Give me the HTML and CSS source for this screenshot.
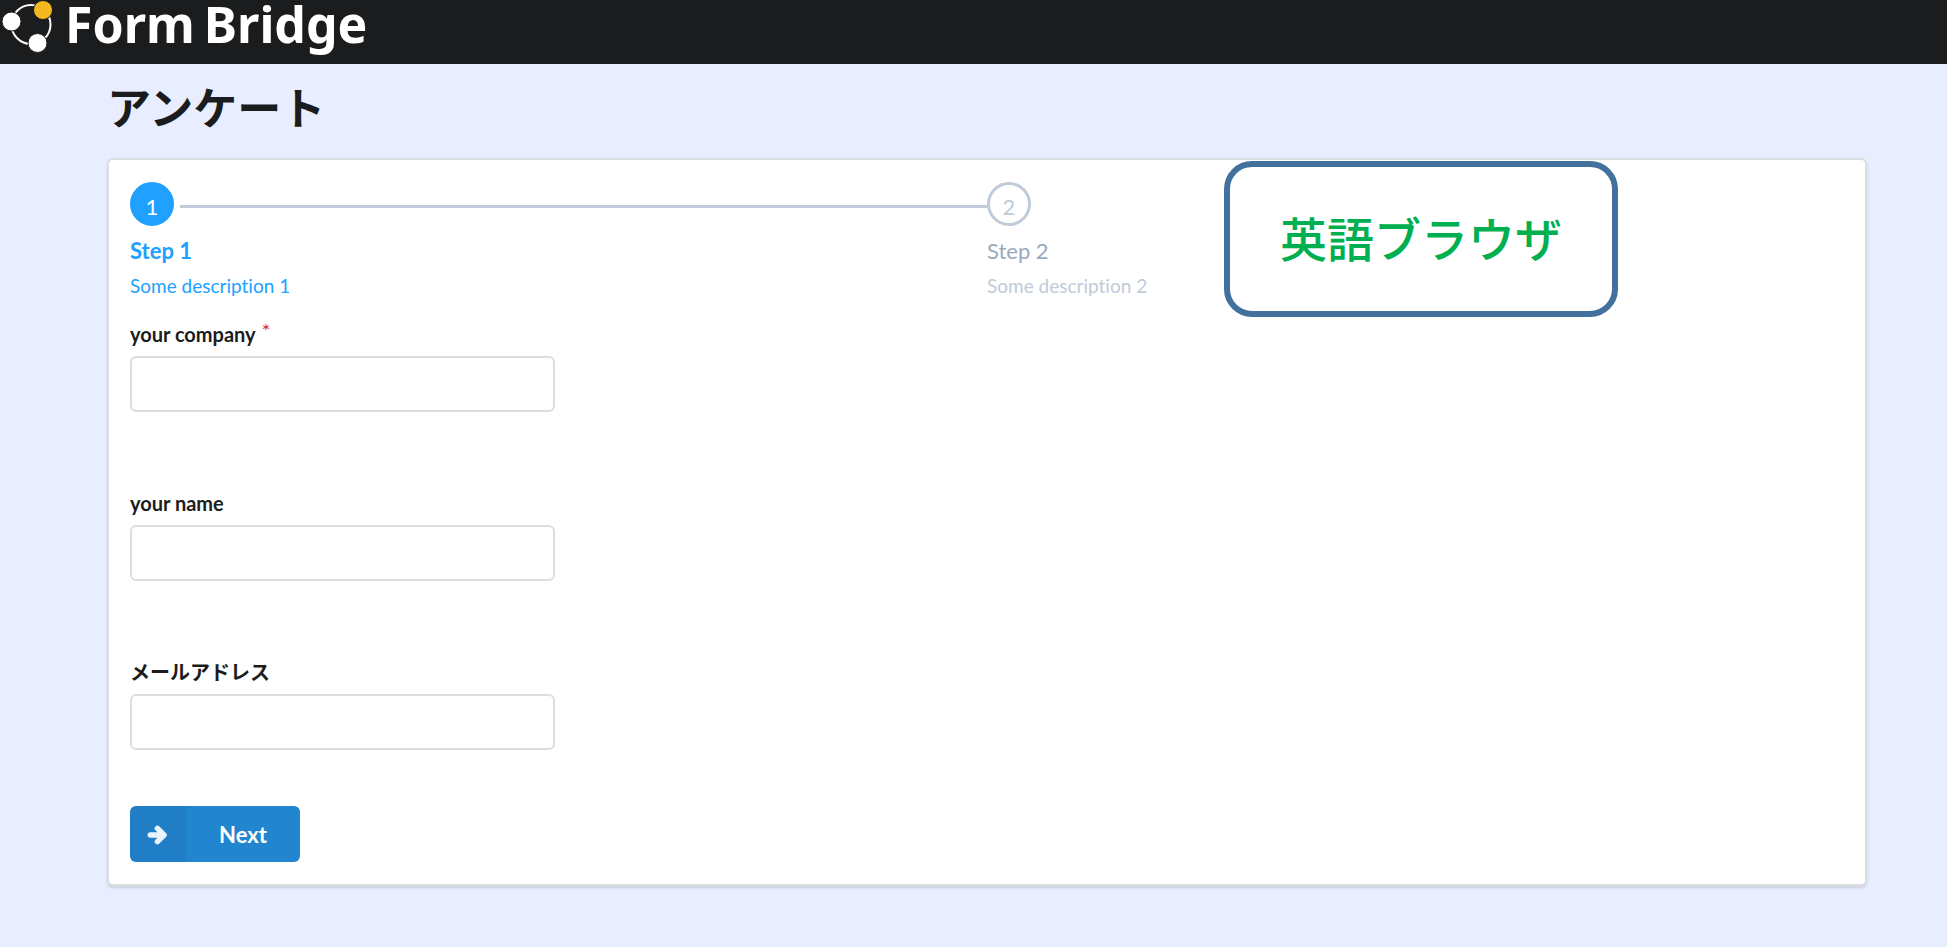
FILE: index.html
```html
<!DOCTYPE html>
<html lang="ja">
<head>
    <meta charset="UTF-8">
    <meta name="viewport" content="width=device-width, initial-scale=1.0">
    <title>Form Bridge</title>
    <link rel="stylesheet" href="styles.css">
</head>
<body>
    <header class="header">
        <svg class="logo-mark" viewBox="0 0 54 54" aria-hidden="true">
            <circle class="logo-ring" cx="31" cy="24.500" r="19.500"/>
            <circle class="logo-dot" cx="11.500" cy="21.500" r="9.500"/>
            <circle class="logo-dot" cx="37.500" cy="43" r="9.500"/>
            <circle class="logo-dot logo-dot--yellow" cx="43" cy="10" r="9.500"/>
        </svg>
        <div class="logo-text"><span>Form</span> <span>Bridge</span></div>
    </header>

    <main class="container">
        <h1 class="title">アンケート</h1>

        <div class="segment">
            <ol class="steps">
                <li class="step active">
                    <div class="step-head"><span class="step-number">1</span></div>
                    <div class="step-title">Step 1</div>
                    <div class="step-description">Some description 1</div>
                </li>
                <li class="step">
                    <div class="step-head"><span class="step-number">2</span></div>
                    <div class="step-title">Step 2</div>
                    <div class="step-description">Some description 2</div>
                </li>
            </ol>

            <form class="form">
                <div class="field required">
                    <label for="company">your company</label>
                    <input type="text" id="company">
                </div>
                <div class="field">
                    <label for="name">your name</label>
                    <input type="text" id="name">
                </div>
                <div class="field">
                    <label for="mail">メールアドレス</label>
                    <input type="text" id="mail">
                </div>
                <button type="button" class="next">
                    <span class="next-icon">
                        <svg viewBox="0 0 20 20" aria-hidden="true">
                            <path d="M3 10H15M9.500 4L15.500 10L9.500 16"/>
                        </svg>
                    </span>
                    <span class="next-label">Next</span>
                </button>
            </form>

            <div class="callout">英語ブラウザ</div>
        </div>
    </main>
</body>
</html>
```
FILE: styles.css
```css
* {
    box-sizing: border-box;
}

body {
    margin: 0;
    min-height: 100vh;
    background: #e8eeff;
    color: #1b1c1d;
    font-family: Lato, "Noto Sans CJK JP", sans-serif;
    font-size: 20px;
    line-height: 28px;
    font-variant-ligatures: none;
}

.header {
    display: flex;
    align-items: flex-start;
    height: 64px;
    background: #1b1c1d;
}

.logo-mark {
    width: 54px;
    height: 54px;
}

.logo-ring {
    fill: none;
    stroke: #fff;
    stroke-width: 2;
}

.logo-dot {
    fill: #fff;
    stroke: #1b1c1d;
    stroke-width: 1;
}

.logo-dot--yellow {
    fill: #f5b91f;
}

.logo-text {
    display: flex;
    gap: 9px;
    margin-left: 11px;
    color: #fff;
    font-family: "Noto Sans", sans-serif;
    font-size: 50px;
    font-weight: 700;
    line-height: 48px;
}

.container {
    padding: 20px 80px 48px 107px;
}

.title {
    margin: 0 0 26px;
    font-size: 44px;
    font-weight: 700;
    line-height: 48px;
}

.segment {
    position: relative;
    padding: 22px 21px;
    background: #fff;
    border: 2px solid #dcdde0;
    border-radius: 6px;
    box-shadow: 0 2px 3px rgba(34, 36, 38, 0.15);
}

.steps {
    display: flex;
    margin: 0;
    padding: 0;
    list-style: none;
}

.step {
    flex: 1;
    color: #bfcbd9;
}

.step-head {
    display: flex;
    align-items: center;
    gap: 6px;
}

.step-number {
    width: 44px;
    height: 44px;
    padding-top: 3px;
    border: 3px solid #bfcbd9;
    border-radius: 50%;
    font-size: 22px;
    line-height: 38px;
    text-align: center;
}

.step-head::after {
    content: '';
    flex: 1;
    height: 3px;
    margin-top: 5px;
    background: #bfcbd9;
}

.step:last-child .step-head::after {
    display: none;
}

.step-title {
    margin-top: 7px;
    color: #99a9bf;
    font-size: 22px;
    line-height: 36px;
}

.step-description {
    font-size: 19px;
    line-height: 34px;
}

.active,
.active .step-title {
    color: #20a0ff;
}

.active .step-title {
    font-weight: 700;
}

.active .step-number {
    background: #20a0ff;
    border-color: #20a0ff;
    color: #fff;
}

.form {
    margin-top: 17px;
}

.field {
    margin-bottom: 77px;
}

.field:nth-child(3) {
    margin-bottom: 56px;
}

.field label {
    display: block;
    margin-bottom: 8px;
    font-weight: 700;
}

.required label::after {
    content: '*';
    margin-left: 6px;
    color: #db2828;
    font-weight: 400;
    vertical-align: top;
    line-height: 20px;
}

.field input {
    display: block;
    width: calc(25% - 4px);
    height: 56px;
    padding: 0 20px;
    border: 2px solid #dededf;
    border-radius: 6px;
    background: #fff;
    font: inherit;
}

.next {
    display: flex;
    width: 170px;
    height: 56px;
    padding: 0;
    overflow: hidden;
    border: 0;
    border-radius: 6px;
    background: #2185d0;
    color: #fff;
    font: inherit;
    font-size: 22px;
    font-weight: 700;
}

.next-icon {
    display: flex;
    align-items: center;
    justify-content: center;
    width: 56px;
    height: 56px;
    padding-top: 2px;
    background: rgba(0, 0, 0, 0.05);
}

.next-icon svg {
    width: 22px;
    height: 22px;
    fill: none;
    stroke: #e9f3fa;
    stroke-width: 5;
    stroke-linecap: round;
    stroke-linejoin: round;
}

.next-label {
    flex: 1;
    line-height: 58px;
    text-align: center;
}

/* note lying over the card */
.callout {
    position: absolute;
    top: 1px;
    right: 247px;
    width: 394px;
    height: 156px;
    border: 6px solid #41719c;
    border-radius: 28px;
    background: #fff;
    color: #00b050;
    font-family: "Noto Sans CJK JP", sans-serif;
    font-size: 47px;
    font-weight: 500;
    line-height: 140px;
    text-align: center;
}
```
